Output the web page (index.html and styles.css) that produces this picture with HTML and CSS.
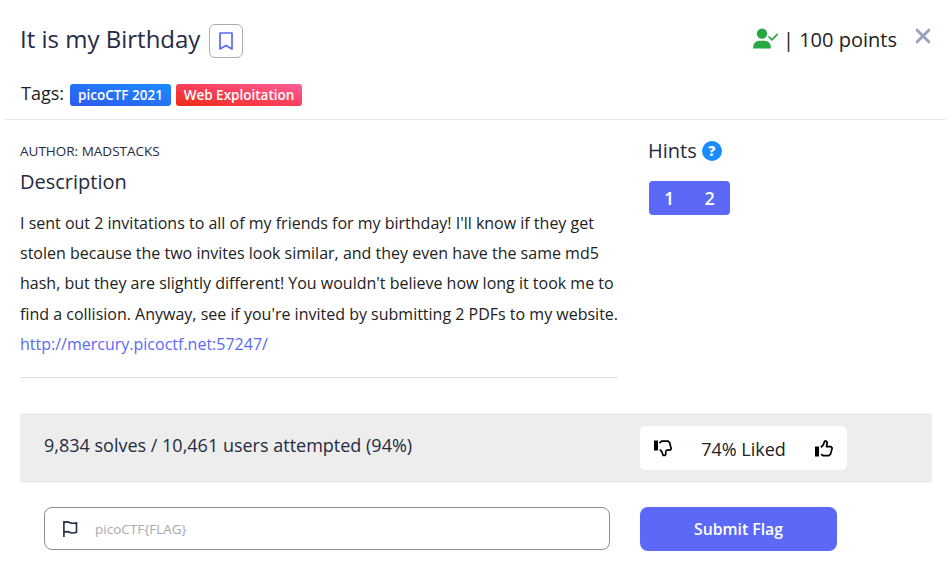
FILE: index.html
```html
<!DOCTYPE html>
<html lang="en">
<head>
<meta charset="utf-8">
<title>It is my Birthday</title>
<link rel="stylesheet" href="styles.css">
</head>
<body>
<main class="modal">
  <header class="header">
    <div class="title-row">
      <h1 class="title">It is my Birthday</h1>
      <button class="bookmark" aria-label="Bookmark">
        <svg width="14" height="18" viewBox="0 0 14 18" fill="none" stroke="#5b69f6" stroke-width="1.7" stroke-linejoin="round"><path d="M1 1h12v16l-6-3.6L1 17z"/></svg>
      </button>
      <div class="points">
        <svg class="solved" width="26" height="21" viewBox="0 0 26 21"><circle cx="9" cy="5.6" r="5.2" fill="#28a745"/><path d="M.2 20.4v-1.6a6 6 0 0 1 6-6h5.600a6 6 0 0 1 6 6v1.600z" fill="#28a745"/><path d="M16 9l2.900 2.900 5.300-5.500" fill="none" stroke="#28a745" stroke-width="1.700" stroke-linecap="round" stroke-linejoin="round"/></svg>
        <span class="points-text">| 100 points</span>
      </div>
      <button class="close" aria-label="Close">
        <svg width="16" height="16" viewBox="0 0 16 16" stroke="#9aa1bd" stroke-width="3" stroke-linecap="round"><path d="M2.200 2.200l11.600 11.600M13.800 2.200L2.200 13.800"/></svg>
      </button>
    </div>
    <div class="tags">
      <span class="tags-label">Tags:</span>
      <span class="badge badge-blue">picoCTF 2021</span>
      <span class="badge badge-red">Web Exploitation</span>
    </div>
  </header>
  <div class="body">
    <section class="details">
      <div class="author">AUTHOR: MADSTACKS</div>
      <h2 class="heading">Description</h2>
      <p class="text">I sent out 2 invitations to all of my friends for my birthday! I'll know if they get<br>stolen because the two invites look similar, and they even have the same md5<br>hash, but they are slightly different! You wouldn't believe how long it took me to<br>find a collision. Anyway, see if you're invited by submitting 2 PDFs to my website.<br><a class="link">http://mercury.picoctf.net:57247/</a></p>
    </section>
    <section class="hints">
      <div class="hints-title"><span class="hints-label">Hints</span><span class="help">?</span></div>
      <div class="hint-buttons"><span>1</span><span>2</span></div>
    </section>
  </div>
  <div class="stats">
    <div class="solves">9,834 solves / 10,461 users attempted (94%)</div>
    <div class="rating">
      <svg width="18" height="17" viewBox="0 0 18 17"><path d="M0 .5h4v10H0z"/><path d="M5.500 3.200L7.600 1.200h6.600l1.500 1.600 1.500 6-1.300 1.400h-3.800M5.800 9.600l1.800 1.700 1.600 4.200h1.700l.9-1.500v-3.600" fill="none" stroke="#000" stroke-width="1.700" stroke-linejoin="round"/></svg>
      <span class="liked">74% Liked</span>
      <svg width="18" height="17" viewBox="0 0 18 17"><path d="M0 6.500h4v10H0z"/><path d="M5.800 7.400l2.300-2.300 1.600-4h1.500l1 1.400-.7 4.100h4.400l1.300 1.400-1.700 6.200-1.700 1.500H8.300l-2.200-1.500" fill="none" stroke="#000" stroke-width="1.700" stroke-linejoin="round"/></svg>
    </div>
  </div>
  <div class="submit-row">
    <label class="flag-field">
      <svg width="16" height="16" viewBox="0 0 16 16" fill="none" stroke="#252b42" stroke-width="1.600" stroke-linejoin="round"><path d="M.9 0v16M.9 1.600c2.300-1.100 4.300-.9 6.300.1s4 .7 6.300 0v9.600c-2.300 1-4.300 1-6.300.1s-4-1.100-6.300-.1"/></svg>
      <input class="flag-input" type="text" placeholder="picoCTF{FLAG}">
    </label>
    <button class="submit">Submit Flag</button>
  </div>
</main>
</body>
</html>
```
FILE: styles.css
```css
* { box-sizing: border-box; }
body { margin: 0; background: #fff; color: #222; font-family: "Open Sans", "Noto Sans", sans-serif; font-size: 16px; }
h1, h2, p { margin: 0; font-weight: 400; }
button { font-family: inherit; padding: 0; background: none; border: 0; }
svg { display: block; flex: none; }
.modal { width: 952px; height: 586px; overflow: hidden; white-space: nowrap; }
.header { height: 120px; margin: 0 6px 0 5px; padding: 24px 15px 0; border-bottom: 1px solid #e9e9e9; }
.title-row { display: flex; align-items: flex-start; height: 34px; }
.title { width: 189px; font-size: 24px; line-height: 29px; color: #252b42; }
.bookmark { display: flex; align-items: center; justify-content: center; width: 34px; height: 34px; border: 1px solid #a9adb8; border-radius: 6px; }
.points { display: flex; width: 162px; margin-left: 510px; }
.solved { margin-top: 4px; }
.points-text { margin-left: 4px; font-size: 20px; line-height: 32px; }
.close { margin-top: 4px; }
.tags { display: flex; align-items: flex-start; height: 22px; margin-top: 26px; }
.tags-label { width: 50px; padding-left: 1px; font-size: 18px; line-height: 18px; }
.badge { height: 22px; border-radius: 3px; color: #fff; font-size: 13.500px; font-weight: 600; line-height: 22px; text-align: center; }
.badge-blue { width: 101px; margin-right: 5px; background: linear-gradient(to top right, #2f58f0, #1a8cff); }
.badge-red { width: 126px; background: linear-gradient(to top right, #f02a18, #fa4260 55%, #ff5f9a); }
.body { display: flex; height: 293px; padding: 0 20px; }
.details { width: 598px; height: 258px; padding-top: 21px; border-bottom: 1px solid #dedede; }
.author { font-size: 13.500px; line-height: 20px; color: #252b42; }
.heading { margin-top: 7px; font-size: 20px; line-height: 28px; color: #252b42; }
.text { margin-top: 12px; font-size: 16px; line-height: 30.240px; }
.link { color: #5b69f6; }
.hints { margin-left: 30px; padding-top: 17px; }
.hints-title { display: flex; align-items: center; height: 28px; font-size: 20px; color: #252b42; }
.hints-label { padding-bottom: 2px; }
.help { width: 20px; height: 20px; margin-left: 5px; border-radius: 50%; background: #1a8cff; color: #fff; font-size: 14px; font-weight: 800; line-height: 20px; text-align: center; }
.hint-buttons { display: flex; width: 81px; height: 34px; margin: 16px 0 0 1px; border-radius: 4px; background: #5b69f6; color: #fff; font-size: 18px; font-weight: 600; line-height: 34px; }
.hint-buttons span { flex: 1; text-align: center; }
.stats { display: flex; height: 70px; margin: 0 20px; padding: 13px 24px; background: #ededed; }
.solves { width: 596px; font-size: 18px; line-height: 38px; color: #252b42; }
.rating { display: flex; align-items: center; justify-content: space-between; width: 207px; height: 44px; padding: 0 14px; border-radius: 5px; background: #fff; font-size: 18px; }
.liked { padding-top: 2px; }
.submit-row { display: flex; padding: 24px 44px 0; }
.flag-field { display: flex; align-items: center; width: 566px; height: 43px; padding-left: 18px; border: 1px solid #8b8c99; border-radius: 8px; }
.flag-input { width: 480px; margin-left: 16px; padding: 0; border: 0; outline: 0; font-family: inherit; font-size: 13.500px; color: #252b42; }
.flag-input::placeholder { color: #a9a9b1; opacity: 1; }
.submit { width: 197px; height: 44px; margin-left: 30px; border-radius: 8px; background: #5b69f6; color: #fff; font-size: 15.750px; font-weight: 600; }
```
